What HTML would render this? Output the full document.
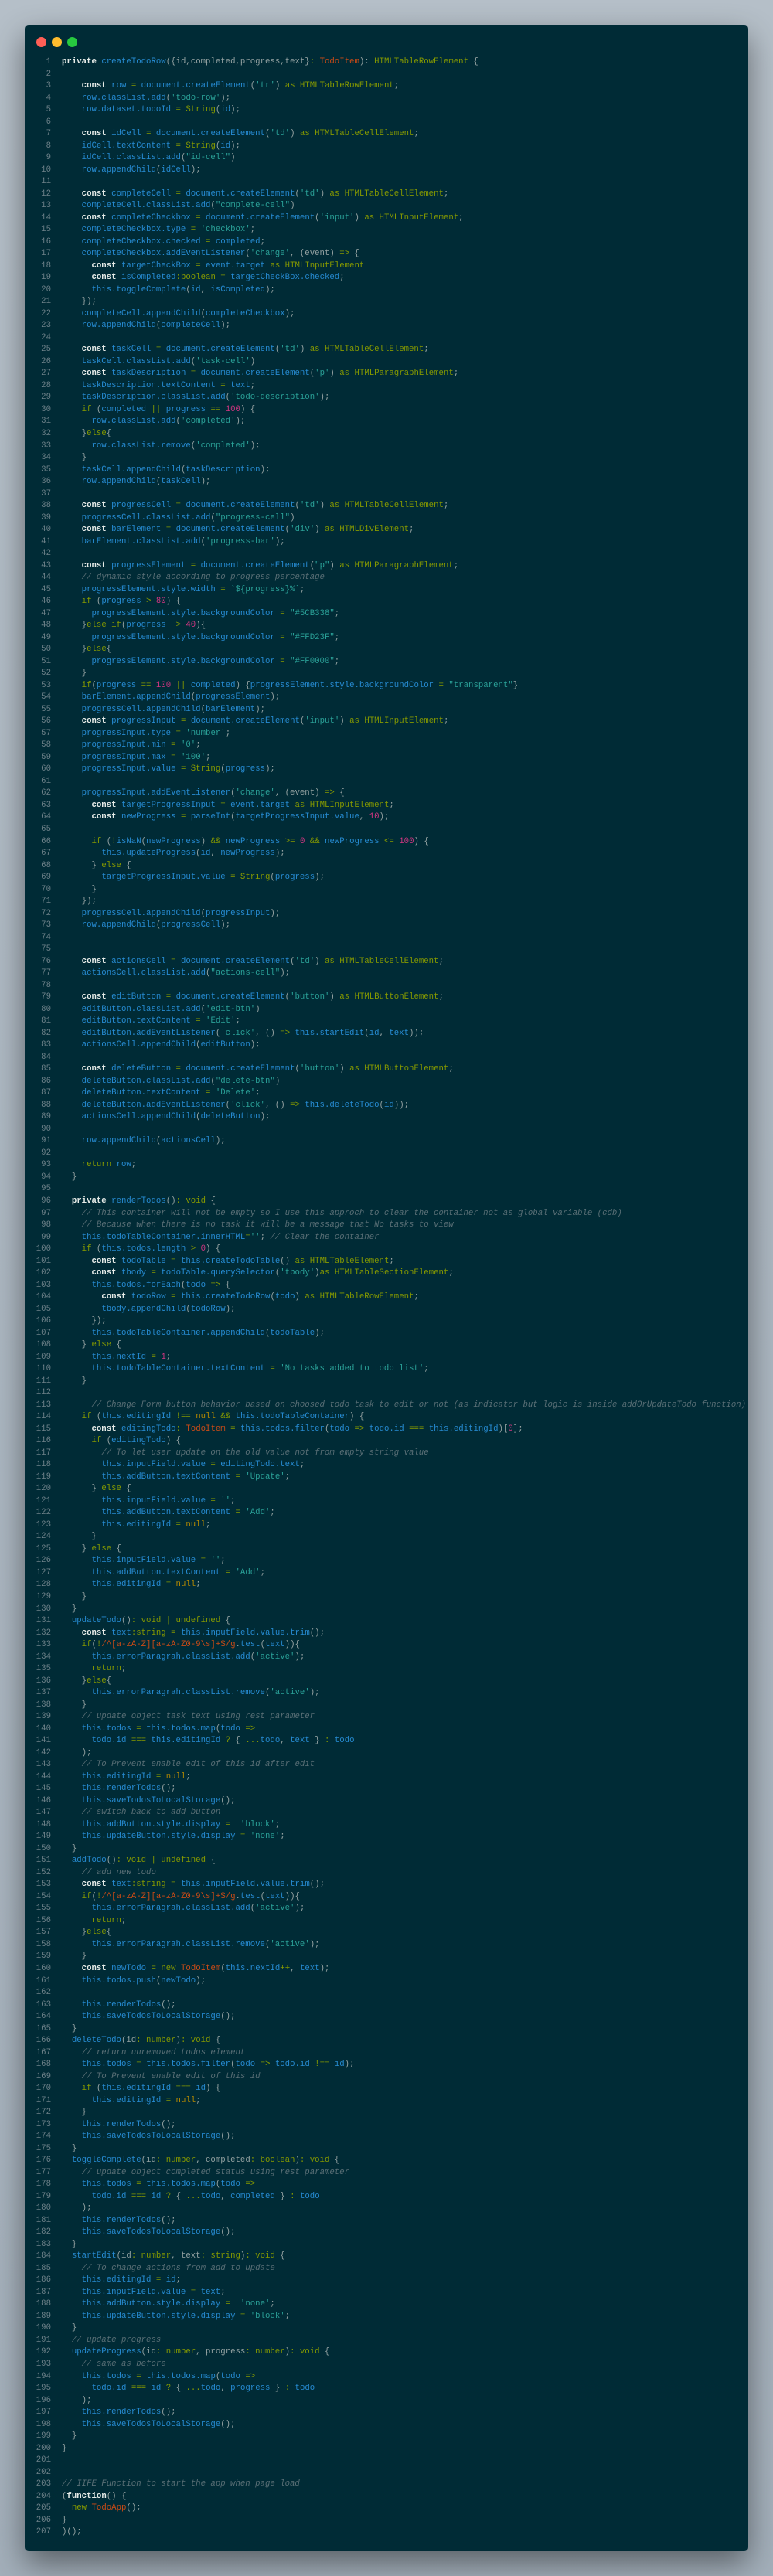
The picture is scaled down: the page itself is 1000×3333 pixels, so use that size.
<!DOCTYPE html>
<html><head><meta charset="utf-8"><style>
html,body{margin:0;padding:0;}
body{width:1000px;height:3333px;background:linear-gradient(#b5bfc8,#a3afba);position:relative;overflow:hidden;font-family:"Liberation Mono",monospace;}
.win{position:absolute;left:32px;top:32px;width:936px;height:3269px;background:#002b36;border-radius:5px;box-shadow:0 16px 40px rgba(0,0,0,0.45);}
.dot{position:absolute;top:16px;width:13px;height:13px;border-radius:50%;}
.code{position:absolute;left:0;top:41px;font-size:10.7px;line-height:15.52px;color:#93a1a1;}
.l{height:15.52px;white-space:pre;overflow:hidden;}
.ln{display:inline-block;width:34px;text-align:right;color:#6c8088;margin-right:14px;}
.k{color:#e6ebe8;font-weight:bold}
.v{color:#268bd2}
.s{color:#2aa198}
.t{color:#859900}
.n{color:#d33682}
.c{color:#586e75;font-style:italic}
.o{color:#cb4b16}
.y{color:#b58900}
</style></head><body>
<div class="win">
<div class="dot" style="left:15px;background:#ff5f56"></div>
<div class="dot" style="left:35px;background:#ffbd2e"></div>
<div class="dot" style="left:55px;background:#27c93f"></div>
<div class="code">
<div class="l"><span class="ln">1</span><span class="k">private</span> <span class="v">createTodoRow</span>({id,completed,progress,text}<span class="t">:</span> <span class="o">TodoItem</span>): <span class="t">HTMLTableRowElement</span> {</div>
<div class="l"><span class="ln">2</span></div>
<div class="l"><span class="ln">3</span>    <span class="k">const</span> <span class="v">row</span> <span class="t">=</span> <span class="v">document.createElement</span>(<span class="s">'tr'</span>) <span class="t">as HTMLTableRowElement</span>;</div>
<div class="l"><span class="ln">4</span>    <span class="v">row.classList.add</span>(<span class="s">'todo-row'</span>);</div>
<div class="l"><span class="ln">5</span>    <span class="v">row.dataset.todoId</span> <span class="t">=</span> <span class="t">String</span>(<span class="v">id</span>);</div>
<div class="l"><span class="ln">6</span></div>
<div class="l"><span class="ln">7</span>    <span class="k">const</span> <span class="v">idCell</span> <span class="t">=</span> <span class="v">document.createElement</span>(<span class="s">'td'</span>) <span class="t">as HTMLTableCellElement</span>;</div>
<div class="l"><span class="ln">8</span>    <span class="v">idCell.textContent</span> <span class="t">=</span> <span class="t">String</span>(<span class="v">id</span>);</div>
<div class="l"><span class="ln">9</span>    <span class="v">idCell.classList.add</span>(<span class="s">"id-cell"</span>)</div>
<div class="l"><span class="ln">10</span>    <span class="v">row.appendChild</span>(<span class="v">idCell</span>);</div>
<div class="l"><span class="ln">11</span></div>
<div class="l"><span class="ln">12</span>    <span class="k">const</span> <span class="v">completeCell</span> <span class="t">=</span> <span class="v">document.createElement</span>(<span class="s">'td'</span>) <span class="t">as HTMLTableCellElement</span>;</div>
<div class="l"><span class="ln">13</span>    <span class="v">completeCell.classList.add</span>(<span class="s">"complete-cell"</span>)</div>
<div class="l"><span class="ln">14</span>    <span class="k">const</span> <span class="v">completeCheckbox</span> <span class="t">=</span> <span class="v">document.createElement</span>(<span class="s">'input'</span>) <span class="t">as HTMLInputElement</span>;</div>
<div class="l"><span class="ln">15</span>    <span class="v">completeCheckbox.type</span> <span class="t">=</span> <span class="s">'checkbox'</span>;</div>
<div class="l"><span class="ln">16</span>    <span class="v">completeCheckbox.checked</span> <span class="t">=</span> <span class="v">completed</span>;</div>
<div class="l"><span class="ln">17</span>    <span class="v">completeCheckbox.addEventListener</span>(<span class="s">'change'</span>, (event) <span class="t">=&gt;</span> {</div>
<div class="l"><span class="ln">18</span>      <span class="k">const</span> <span class="v">targetCheckBox</span> <span class="t">=</span> <span class="v">event.target</span> <span class="t">as HTMLInputElement</span></div>
<div class="l"><span class="ln">19</span>      <span class="k">const</span> <span class="v">isCompleted</span><span class="t">:boolean</span> <span class="t">=</span> <span class="v">targetCheckBox.checked</span>;</div>
<div class="l"><span class="ln">20</span>      <span class="v">this.toggleComplete</span>(<span class="v">id</span>, <span class="v">isCompleted</span>);</div>
<div class="l"><span class="ln">21</span>    });</div>
<div class="l"><span class="ln">22</span>    <span class="v">completeCell.appendChild</span>(<span class="v">completeCheckbox</span>);</div>
<div class="l"><span class="ln">23</span>    <span class="v">row.appendChild</span>(<span class="v">completeCell</span>);</div>
<div class="l"><span class="ln">24</span></div>
<div class="l"><span class="ln">25</span>    <span class="k">const</span> <span class="v">taskCell</span> <span class="t">=</span> <span class="v">document.createElement</span>(<span class="s">'td'</span>) <span class="t">as HTMLTableCellElement</span>;</div>
<div class="l"><span class="ln">26</span>    <span class="v">taskCell.classList.add</span>(<span class="s">'task-cell'</span>)</div>
<div class="l"><span class="ln">27</span>    <span class="k">const</span> <span class="v">taskDescription</span> <span class="t">=</span> <span class="v">document.createElement</span>(<span class="s">'p'</span>) <span class="t">as HTMLParagraphElement</span>;</div>
<div class="l"><span class="ln">28</span>    <span class="v">taskDescription.textContent</span> <span class="t">=</span> <span class="v">text</span>;</div>
<div class="l"><span class="ln">29</span>    <span class="v">taskDescription.classList.add</span>(<span class="s">'todo-description'</span>);</div>
<div class="l"><span class="ln">30</span>    <span class="t">if</span> (<span class="v">completed</span> <span class="t">||</span> <span class="v">progress</span> <span class="t">==</span> <span class="n">100</span>) {</div>
<div class="l"><span class="ln">31</span>      <span class="v">row.classList.add</span>(<span class="s">'completed'</span>);</div>
<div class="l"><span class="ln">32</span>    }<span class="t">else</span>{</div>
<div class="l"><span class="ln">33</span>      <span class="v">row.classList.remove</span>(<span class="s">'completed'</span>);</div>
<div class="l"><span class="ln">34</span>    }</div>
<div class="l"><span class="ln">35</span>    <span class="v">taskCell.appendChild</span>(<span class="v">taskDescription</span>);</div>
<div class="l"><span class="ln">36</span>    <span class="v">row.appendChild</span>(<span class="v">taskCell</span>);</div>
<div class="l"><span class="ln">37</span></div>
<div class="l"><span class="ln">38</span>    <span class="k">const</span> <span class="v">progressCell</span> <span class="t">=</span> <span class="v">document.createElement</span>(<span class="s">'td'</span>) <span class="t">as HTMLTableCellElement</span>;</div>
<div class="l"><span class="ln">39</span>    <span class="v">progressCell.classList.add</span>(<span class="s">"progress-cell"</span>)</div>
<div class="l"><span class="ln">40</span>    <span class="k">const</span> <span class="v">barElement</span> <span class="t">=</span> <span class="v">document.createElement</span>(<span class="s">'div'</span>) <span class="t">as HTMLDivElement</span>;</div>
<div class="l"><span class="ln">41</span>    <span class="v">barElement.classList.add</span>(<span class="s">'progress-bar'</span>);</div>
<div class="l"><span class="ln">42</span></div>
<div class="l"><span class="ln">43</span>    <span class="k">const</span> <span class="v">progressElement</span> <span class="t">=</span> <span class="v">document.createElement</span>(<span class="s">"p"</span>) <span class="t">as HTMLParagraphElement</span>;</div>
<div class="l"><span class="ln">44</span>    <span class="c">// dynamic style according to progress percentage</span></div>
<div class="l"><span class="ln">45</span>    <span class="v">progressElement.style.width</span> <span class="t">=</span> <span class="s">`${progress}%`</span>;</div>
<div class="l"><span class="ln">46</span>    <span class="t">if</span> (<span class="v">progress</span> <span class="t">&gt;</span> <span class="n">80</span>) {</div>
<div class="l"><span class="ln">47</span>      <span class="v">progressElement.style.backgroundColor</span> <span class="t">=</span> <span class="s">"#5CB338"</span>;</div>
<div class="l"><span class="ln">48</span>    }<span class="t">else if</span>(<span class="v">progress</span>  <span class="t">&gt;</span> <span class="n">40</span>){</div>
<div class="l"><span class="ln">49</span>      <span class="v">progressElement.style.backgroundColor</span> <span class="t">=</span> <span class="s">"#FFD23F"</span>;</div>
<div class="l"><span class="ln">50</span>    }<span class="t">else</span>{</div>
<div class="l"><span class="ln">51</span>      <span class="v">progressElement.style.backgroundColor</span> <span class="t">=</span> <span class="s">"#FF0000"</span>;</div>
<div class="l"><span class="ln">52</span>    }</div>
<div class="l"><span class="ln">53</span>    <span class="t">if</span>(<span class="v">progress</span> <span class="t">==</span> <span class="n">100</span> <span class="t">||</span> <span class="v">completed</span>) {<span class="v">progressElement.style.backgroundColor</span> <span class="t">=</span> <span class="s">"transparent"</span>}</div>
<div class="l"><span class="ln">54</span>    <span class="v">barElement.appendChild</span>(<span class="v">progressElement</span>);</div>
<div class="l"><span class="ln">55</span>    <span class="v">progressCell.appendChild</span>(<span class="v">barElement</span>);</div>
<div class="l"><span class="ln">56</span>    <span class="k">const</span> <span class="v">progressInput</span> <span class="t">=</span> <span class="v">document.createElement</span>(<span class="s">'input'</span>) <span class="t">as HTMLInputElement</span>;</div>
<div class="l"><span class="ln">57</span>    <span class="v">progressInput.type</span> <span class="t">=</span> <span class="s">'number'</span>;</div>
<div class="l"><span class="ln">58</span>    <span class="v">progressInput.min</span> <span class="t">=</span> <span class="s">'0'</span>;</div>
<div class="l"><span class="ln">59</span>    <span class="v">progressInput.max</span> <span class="t">=</span> <span class="s">'100'</span>;</div>
<div class="l"><span class="ln">60</span>    <span class="v">progressInput.value</span> <span class="t">=</span> <span class="t">String</span>(<span class="v">progress</span>);</div>
<div class="l"><span class="ln">61</span></div>
<div class="l"><span class="ln">62</span>    <span class="v">progressInput.addEventListener</span>(<span class="s">'change'</span>, (event) <span class="t">=&gt;</span> {</div>
<div class="l"><span class="ln">63</span>      <span class="k">const</span> <span class="v">targetProgressInput</span> <span class="t">=</span> <span class="v">event.target</span> <span class="t">as HTMLInputElement</span>;</div>
<div class="l"><span class="ln">64</span>      <span class="k">const</span> <span class="v">newProgress</span> <span class="t">=</span> <span class="v">parseInt</span>(<span class="v">targetProgressInput.value</span>, <span class="n">10</span>);</div>
<div class="l"><span class="ln">65</span></div>
<div class="l"><span class="ln">66</span>      <span class="t">if</span> (<span class="t">!</span><span class="v">isNaN</span>(<span class="v">newProgress</span>) <span class="t">&amp;&amp;</span> <span class="v">newProgress</span> <span class="t">&gt;=</span> <span class="n">0</span> <span class="t">&amp;&amp;</span> <span class="v">newProgress</span> <span class="t">&lt;=</span> <span class="n">100</span>) {</div>
<div class="l"><span class="ln">67</span>        <span class="v">this.updateProgress</span>(<span class="v">id</span>, <span class="v">newProgress</span>);</div>
<div class="l"><span class="ln">68</span>      } <span class="t">else</span> {</div>
<div class="l"><span class="ln">69</span>        <span class="v">targetProgressInput.value</span> <span class="t">=</span> <span class="t">String</span>(<span class="v">progress</span>);</div>
<div class="l"><span class="ln">70</span>      }</div>
<div class="l"><span class="ln">71</span>    });</div>
<div class="l"><span class="ln">72</span>    <span class="v">progressCell.appendChild</span>(<span class="v">progressInput</span>);</div>
<div class="l"><span class="ln">73</span>    <span class="v">row.appendChild</span>(<span class="v">progressCell</span>);</div>
<div class="l"><span class="ln">74</span></div>
<div class="l"><span class="ln">75</span></div>
<div class="l"><span class="ln">76</span>    <span class="k">const</span> <span class="v">actionsCell</span> <span class="t">=</span> <span class="v">document.createElement</span>(<span class="s">'td'</span>) <span class="t">as HTMLTableCellElement</span>;</div>
<div class="l"><span class="ln">77</span>    <span class="v">actionsCell.classList.add</span>(<span class="s">"actions-cell"</span>);</div>
<div class="l"><span class="ln">78</span></div>
<div class="l"><span class="ln">79</span>    <span class="k">const</span> <span class="v">editButton</span> <span class="t">=</span> <span class="v">document.createElement</span>(<span class="s">'button'</span>) <span class="t">as HTMLButtonElement</span>;</div>
<div class="l"><span class="ln">80</span>    <span class="v">editButton.classList.add</span>(<span class="s">'edit-btn'</span>)</div>
<div class="l"><span class="ln">81</span>    <span class="v">editButton.textContent</span> <span class="t">=</span> <span class="s">'Edit'</span>;</div>
<div class="l"><span class="ln">82</span>    <span class="v">editButton.addEventListener</span>(<span class="s">'click'</span>, () <span class="t">=&gt;</span> <span class="v">this.startEdit</span>(<span class="v">id</span>, <span class="v">text</span>));</div>
<div class="l"><span class="ln">83</span>    <span class="v">actionsCell.appendChild</span>(<span class="v">editButton</span>);</div>
<div class="l"><span class="ln">84</span></div>
<div class="l"><span class="ln">85</span>    <span class="k">const</span> <span class="v">deleteButton</span> <span class="t">=</span> <span class="v">document.createElement</span>(<span class="s">'button'</span>) <span class="t">as HTMLButtonElement</span>;</div>
<div class="l"><span class="ln">86</span>    <span class="v">deleteButton.classList.add</span>(<span class="s">"delete-btn"</span>)</div>
<div class="l"><span class="ln">87</span>    <span class="v">deleteButton.textContent</span> <span class="t">=</span> <span class="s">'Delete'</span>;</div>
<div class="l"><span class="ln">88</span>    <span class="v">deleteButton.addEventListener</span>(<span class="s">'click'</span>, () <span class="t">=&gt;</span> <span class="v">this.deleteTodo</span>(<span class="v">id</span>));</div>
<div class="l"><span class="ln">89</span>    <span class="v">actionsCell.appendChild</span>(<span class="v">deleteButton</span>);</div>
<div class="l"><span class="ln">90</span></div>
<div class="l"><span class="ln">91</span>    <span class="v">row.appendChild</span>(<span class="v">actionsCell</span>);</div>
<div class="l"><span class="ln">92</span></div>
<div class="l"><span class="ln">93</span>    <span class="t">return</span> <span class="v">row</span>;</div>
<div class="l"><span class="ln">94</span>  }</div>
<div class="l"><span class="ln">95</span></div>
<div class="l"><span class="ln">96</span>  <span class="k">private</span> <span class="v">renderTodos</span>()<span class="t">: void</span> {</div>
<div class="l"><span class="ln">97</span>    <span class="c">// This container will not be empty so I use this approch to clear the container not as global variable (cdb)</span></div>
<div class="l"><span class="ln">98</span>    <span class="c">// Because when there is no task it will be a message that No tasks to view</span></div>
<div class="l"><span class="ln">99</span>    <span class="v">this.todoTableContainer.innerHTML</span><span class="t">=</span><span class="s">''</span>; <span class="c">// Clear the container</span></div>
<div class="l"><span class="ln">100</span>    <span class="t">if</span> (<span class="v">this.todos.length</span> <span class="t">&gt;</span> <span class="n">0</span>) {</div>
<div class="l"><span class="ln">101</span>      <span class="k">const</span> <span class="v">todoTable</span> <span class="t">=</span> <span class="v">this.createTodoTable</span>() <span class="t">as HTMLTableElement</span>;</div>
<div class="l"><span class="ln">102</span>      <span class="k">const</span> <span class="v">tbody</span> <span class="t">=</span> <span class="v">todoTable.querySelector</span>(<span class="s">'tbody'</span>)<span class="t">as HTMLTableSectionElement</span>;</div>
<div class="l"><span class="ln">103</span>      <span class="v">this.todos.forEach</span>(<span class="v">todo</span> <span class="t">=&gt;</span> {</div>
<div class="l"><span class="ln">104</span>        <span class="k">const</span> <span class="v">todoRow</span> <span class="t">=</span> <span class="v">this.createTodoRow</span>(<span class="v">todo</span>) <span class="t">as HTMLTableRowElement</span>;</div>
<div class="l"><span class="ln">105</span>        <span class="v">tbody.appendChild</span>(<span class="v">todoRow</span>);</div>
<div class="l"><span class="ln">106</span>      });</div>
<div class="l"><span class="ln">107</span>      <span class="v">this.todoTableContainer.appendChild</span>(<span class="v">todoTable</span>);</div>
<div class="l"><span class="ln">108</span>    } <span class="t">else</span> {</div>
<div class="l"><span class="ln">109</span>      <span class="v">this.nextId</span> <span class="t">=</span> <span class="n">1</span>;</div>
<div class="l"><span class="ln">110</span>      <span class="v">this.todoTableContainer.textContent</span> <span class="t">=</span> <span class="s">'No tasks added to todo list'</span>;</div>
<div class="l"><span class="ln">111</span>    }</div>
<div class="l"><span class="ln">112</span></div>
<div class="l"><span class="ln">113</span>      <span class="c">// Change Form button behavior based on choosed todo task to edit or not (as indicator but logic is inside addOrUpdateTodo function)</span></div>
<div class="l"><span class="ln">114</span>    <span class="t">if</span> (<span class="v">this.editingId</span> <span class="t">!==</span> <span class="y">null</span> <span class="t">&amp;&amp;</span> <span class="v">this.todoTableContainer</span>) {</div>
<div class="l"><span class="ln">115</span>      <span class="k">const</span> <span class="v">editingTodo</span><span class="t">:</span> <span class="o">TodoItem</span> <span class="t">=</span> <span class="v">this.todos.filter</span>(<span class="v">todo</span> <span class="t">=&gt;</span> <span class="v">todo.id</span> <span class="t">===</span> <span class="v">this.editingId</span>)[<span class="n">0</span>];</div>
<div class="l"><span class="ln">116</span>      <span class="t">if</span> (<span class="v">editingTodo</span>) {</div>
<div class="l"><span class="ln">117</span>        <span class="c">// To let user update on the old value not from empty string value</span></div>
<div class="l"><span class="ln">118</span>        <span class="v">this.inputField.value</span> <span class="t">=</span> <span class="v">editingTodo.text</span>;</div>
<div class="l"><span class="ln">119</span>        <span class="v">this.addButton.textContent</span> <span class="t">=</span> <span class="s">'Update'</span>;</div>
<div class="l"><span class="ln">120</span>      } <span class="t">else</span> {</div>
<div class="l"><span class="ln">121</span>        <span class="v">this.inputField.value</span> <span class="t">=</span> <span class="s">''</span>;</div>
<div class="l"><span class="ln">122</span>        <span class="v">this.addButton.textContent</span> <span class="t">=</span> <span class="s">'Add'</span>;</div>
<div class="l"><span class="ln">123</span>        <span class="v">this.editingId</span> <span class="t">=</span> <span class="y">null</span>;</div>
<div class="l"><span class="ln">124</span>      }</div>
<div class="l"><span class="ln">125</span>    } <span class="t">else</span> {</div>
<div class="l"><span class="ln">126</span>      <span class="v">this.inputField.value</span> <span class="t">=</span> <span class="s">''</span>;</div>
<div class="l"><span class="ln">127</span>      <span class="v">this.addButton.textContent</span> <span class="t">=</span> <span class="s">'Add'</span>;</div>
<div class="l"><span class="ln">128</span>      <span class="v">this.editingId</span> <span class="t">=</span> <span class="y">null</span>;</div>
<div class="l"><span class="ln">129</span>    }</div>
<div class="l"><span class="ln">130</span>  }</div>
<div class="l"><span class="ln">131</span>  <span class="v">updateTodo</span>()<span class="t">: void | undefined</span> {</div>
<div class="l"><span class="ln">132</span>    <span class="k">const</span> <span class="v">text</span><span class="t">:string</span> <span class="t">=</span> <span class="v">this.inputField.value.trim</span>();</div>
<div class="l"><span class="ln">133</span>    <span class="t">if</span>(<span class="t">!</span><span class="o">/^[a-zA-Z][a-zA-Z0-9\s]+$/g</span>.<span class="v">test</span>(<span class="v">text</span>)){</div>
<div class="l"><span class="ln">134</span>      <span class="v">this.errorParagrah.classList.add</span>(<span class="s">'active'</span>);</div>
<div class="l"><span class="ln">135</span>      <span class="t">return</span>;</div>
<div class="l"><span class="ln">136</span>    }<span class="t">else</span>{</div>
<div class="l"><span class="ln">137</span>      <span class="v">this.errorParagrah.classList.remove</span>(<span class="s">'active'</span>);</div>
<div class="l"><span class="ln">138</span>    }</div>
<div class="l"><span class="ln">139</span>    <span class="c">// update object task text using rest parameter</span></div>
<div class="l"><span class="ln">140</span>    <span class="v">this.todos</span> <span class="t">=</span> <span class="v">this.todos.map</span>(<span class="v">todo</span> <span class="t">=&gt;</span></div>
<div class="l"><span class="ln">141</span>      <span class="v">todo.id</span> <span class="t">===</span> <span class="v">this.editingId</span> <span class="t">?</span> { <span class="t">...</span><span class="v">todo</span>, <span class="v">text</span> } <span class="t">:</span> <span class="v">todo</span></div>
<div class="l"><span class="ln">142</span>    );</div>
<div class="l"><span class="ln">143</span>    <span class="c">// To Prevent enable edit of this id after edit</span></div>
<div class="l"><span class="ln">144</span>    <span class="v">this.editingId</span> <span class="t">=</span> <span class="y">null</span>;</div>
<div class="l"><span class="ln">145</span>    <span class="v">this.renderTodos</span>();</div>
<div class="l"><span class="ln">146</span>    <span class="v">this.saveTodosToLocalStorage</span>();</div>
<div class="l"><span class="ln">147</span>    <span class="c">// switch back to add button</span></div>
<div class="l"><span class="ln">148</span>    <span class="v">this.addButton.style.display</span> <span class="t">=</span>  <span class="s">'block'</span>;</div>
<div class="l"><span class="ln">149</span>    <span class="v">this.updateButton.style.display</span> <span class="t">=</span> <span class="s">'none'</span>;</div>
<div class="l"><span class="ln">150</span>  }</div>
<div class="l"><span class="ln">151</span>  <span class="v">addTodo</span>()<span class="t">: void | undefined</span> {</div>
<div class="l"><span class="ln">152</span>    <span class="c">// add new todo</span></div>
<div class="l"><span class="ln">153</span>    <span class="k">const</span> <span class="v">text</span><span class="t">:string</span> <span class="t">=</span> <span class="v">this.inputField.value.trim</span>();</div>
<div class="l"><span class="ln">154</span>    <span class="t">if</span>(<span class="t">!</span><span class="o">/^[a-zA-Z][a-zA-Z0-9\s]+$/g</span>.<span class="v">test</span>(<span class="v">text</span>)){</div>
<div class="l"><span class="ln">155</span>      <span class="v">this.errorParagrah.classList.add</span>(<span class="s">'active'</span>);</div>
<div class="l"><span class="ln">156</span>      <span class="t">return</span>;</div>
<div class="l"><span class="ln">157</span>    }<span class="t">else</span>{</div>
<div class="l"><span class="ln">158</span>      <span class="v">this.errorParagrah.classList.remove</span>(<span class="s">'active'</span>);</div>
<div class="l"><span class="ln">159</span>    }</div>
<div class="l"><span class="ln">160</span>    <span class="k">const</span> <span class="v">newTodo</span> <span class="t">=</span> <span class="t">new</span> <span class="o">TodoItem</span>(<span class="v">this.nextId</span><span class="t">++</span>, <span class="v">text</span>);</div>
<div class="l"><span class="ln">161</span>    <span class="v">this.todos.push</span>(<span class="v">newTodo</span>);</div>
<div class="l"><span class="ln">162</span></div>
<div class="l"><span class="ln">163</span>    <span class="v">this.renderTodos</span>();</div>
<div class="l"><span class="ln">164</span>    <span class="v">this.saveTodosToLocalStorage</span>();</div>
<div class="l"><span class="ln">165</span>  }</div>
<div class="l"><span class="ln">166</span>  <span class="v">deleteTodo</span>(id<span class="t">: number</span>)<span class="t">: void</span> {</div>
<div class="l"><span class="ln">167</span>    <span class="c">// return unremoved todos element</span></div>
<div class="l"><span class="ln">168</span>    <span class="v">this.todos</span> <span class="t">=</span> <span class="v">this.todos.filter</span>(<span class="v">todo</span> <span class="t">=&gt;</span> <span class="v">todo.id</span> <span class="t">!==</span> <span class="v">id</span>);</div>
<div class="l"><span class="ln">169</span>    <span class="c">// To Prevent enable edit of this id</span></div>
<div class="l"><span class="ln">170</span>    <span class="t">if</span> (<span class="v">this.editingId</span> <span class="t">===</span> <span class="v">id</span>) {</div>
<div class="l"><span class="ln">171</span>      <span class="v">this.editingId</span> <span class="t">=</span> <span class="y">null</span>;</div>
<div class="l"><span class="ln">172</span>    }</div>
<div class="l"><span class="ln">173</span>    <span class="v">this.renderTodos</span>();</div>
<div class="l"><span class="ln">174</span>    <span class="v">this.saveTodosToLocalStorage</span>();</div>
<div class="l"><span class="ln">175</span>  }</div>
<div class="l"><span class="ln">176</span>  <span class="v">toggleComplete</span>(id<span class="t">: number</span>, completed<span class="t">: boolean</span>)<span class="t">: void</span> {</div>
<div class="l"><span class="ln">177</span>    <span class="c">// update object completed status using rest parameter</span></div>
<div class="l"><span class="ln">178</span>    <span class="v">this.todos</span> <span class="t">=</span> <span class="v">this.todos.map</span>(<span class="v">todo</span> <span class="t">=&gt;</span></div>
<div class="l"><span class="ln">179</span>      <span class="v">todo.id</span> <span class="t">===</span> <span class="v">id</span> <span class="t">?</span> { <span class="t">...</span><span class="v">todo</span>, <span class="v">completed</span> } <span class="t">:</span> <span class="v">todo</span></div>
<div class="l"><span class="ln">180</span>    );</div>
<div class="l"><span class="ln">181</span>    <span class="v">this.renderTodos</span>();</div>
<div class="l"><span class="ln">182</span>    <span class="v">this.saveTodosToLocalStorage</span>();</div>
<div class="l"><span class="ln">183</span>  }</div>
<div class="l"><span class="ln">184</span>  <span class="v">startEdit</span>(id<span class="t">: number</span>, text<span class="t">: string</span>)<span class="t">: void</span> {</div>
<div class="l"><span class="ln">185</span>    <span class="c">// To change actions from add to update</span></div>
<div class="l"><span class="ln">186</span>    <span class="v">this.editingId</span> <span class="t">=</span> <span class="v">id</span>;</div>
<div class="l"><span class="ln">187</span>    <span class="v">this.inputField.value</span> <span class="t">=</span> <span class="v">text</span>;</div>
<div class="l"><span class="ln">188</span>    <span class="v">this.addButton.style.display</span> <span class="t">=</span>  <span class="s">'none'</span>;</div>
<div class="l"><span class="ln">189</span>    <span class="v">this.updateButton.style.display</span> <span class="t">=</span> <span class="s">'block'</span>;</div>
<div class="l"><span class="ln">190</span>  }</div>
<div class="l"><span class="ln">191</span>  <span class="c">// update progress</span></div>
<div class="l"><span class="ln">192</span>  <span class="v">updateProgress</span>(id<span class="t">: number</span>, progress<span class="t">: number</span>)<span class="t">: void</span> {</div>
<div class="l"><span class="ln">193</span>    <span class="c">// same as before</span></div>
<div class="l"><span class="ln">194</span>    <span class="v">this.todos</span> <span class="t">=</span> <span class="v">this.todos.map</span>(<span class="v">todo</span> <span class="t">=&gt;</span></div>
<div class="l"><span class="ln">195</span>      <span class="v">todo.id</span> <span class="t">===</span> <span class="v">id</span> <span class="t">?</span> { <span class="t">...</span><span class="v">todo</span>, <span class="v">progress</span> } <span class="t">:</span> <span class="v">todo</span></div>
<div class="l"><span class="ln">196</span>    );</div>
<div class="l"><span class="ln">197</span>    <span class="v">this.renderTodos</span>();</div>
<div class="l"><span class="ln">198</span>    <span class="v">this.saveTodosToLocalStorage</span>();</div>
<div class="l"><span class="ln">199</span>  }</div>
<div class="l"><span class="ln">200</span>}</div>
<div class="l"><span class="ln">201</span></div>
<div class="l"><span class="ln">202</span></div>
<div class="l"><span class="ln">203</span><span class="c">// IIFE Function to start the app when page load</span></div>
<div class="l"><span class="ln">204</span>(<span class="k">function</span>() {</div>
<div class="l"><span class="ln">205</span>  <span class="t">new</span> <span class="o">TodoApp</span>();</div>
<div class="l"><span class="ln">206</span>}</div>
<div class="l"><span class="ln">207</span>)();</div>
</div>
</div>
</body></html>
